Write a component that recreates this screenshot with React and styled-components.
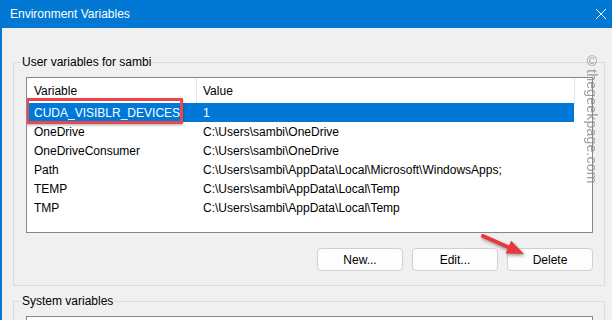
import React from "react";
import styled, { createGlobalStyle } from "styled-components";

const GlobalStyle = createGlobalStyle`
  html, body { margin: 0; padding: 0; background: #f0f0f0; }
  #root { width: 612px; height: 320px; overflow: hidden; }
  * { box-sizing: border-box; }
`;

const Window = styled.div`
  position: relative;
  width: 612px;
  height: 320px;
  display: flex;
  flex-direction: column;
  background: #f0f0f0;
  font-family: "Liberation Sans", Arial, sans-serif;
  font-size: 12px;
  color: #000;
  overflow: hidden;
`;

const TitleBar = styled.div`
  height: 28px;
  flex: 0 0 28px;
  background: #0078d4;
  color: #fff;
  display: flex;
  align-items: center;
  justify-content: space-between;
  padding: 0 5px 0 10px;
  font-size: 12px;
`;

const Body = styled.div`
  flex: 1;
  border-left: 2px solid #0078d4;
  padding: 34px 7px 0 11px;
  display: flex;
  flex-direction: column;
  gap: 15px;
  overflow: hidden;
`;

const Group = styled.div`
  border: 1px solid #dcdcdc;
  padding: 0 11px ${(p) => p.$pb}px 12px;
  display: flex;
  flex-direction: column;
  flex-shrink: 0;
`;

const GroupLabel = styled.div`
  align-self: flex-start;
  margin: -9px 0 0 -5px;
  padding: 0 1px;
  line-height: 16px;
  background: #f0f0f0;
`;

const List = styled.div`
  position: relative;
  margin-top: 7px;
  height: 156px;
  border: 1px solid #828790;
  background: #fff;
  overflow: hidden;
`;

const HeaderRow = styled.div`
  display: grid;
  grid-template-columns: 170px 378px 1fr;
  height: 25px;
`;

const HeaderCell = styled.div`
  display: flex;
  align-items: center;
  padding-left: ${(p) => p.$pl}px;
  border-right: ${(p) => (p.$last ? "none" : "1px solid #e5e5e5")};
`;

const Row = styled.div`
  display: grid;
  grid-template-columns: 170px 377px;
  width: 547px;
  height: 19px;
  background: ${(p) => (p.$selected ? "#0078d7" : "transparent")};
  color: ${(p) => (p.$selected ? "#fff" : "#000")};
`;

const Cell = styled.div`
  display: flex;
  align-items: center;
  padding-left: ${(p) => p.$pl}px;
  white-space: nowrap;
  overflow: hidden;
`;

const Highlight = styled.div`
  position: absolute;
  left: -1px;
  top: 20px;
  width: 157px;
  height: 26px;
  border: 3px solid #e8474b;
  border-radius: 1px;
  box-shadow: 0 1px 3px rgba(0, 0, 0, 0.35);
  pointer-events: none;
`;

const ButtonRow = styled.div`
  display: flex;
  justify-content: flex-end;
  gap: 9px;
  margin-top: 15px;
`;

const Button = styled.button`
  width: 86px;
  height: 23px;
  border: 1px solid #d0d0d0;
  border-radius: 4px;
  background: #fdfdfd;
  font-family: inherit;
  font-size: 12px;
  color: #000;
  padding: 0;
`;

const Watermark = styled.div`
  position: absolute;
  left: 584px;
  top: 53px;
  writing-mode: vertical-rl;
  font-family: "Liberation Sans", Arial, sans-serif;
  font-size: 14px;
  color: #8c8c8c;
  opacity: 0.85;
  letter-spacing: 0.2px;
`;

const ArrowSvg = styled.svg`
  position: absolute;
  left: 476px;
  top: 228px;
  filter: drop-shadow(1px 2px 1.5px rgba(0, 0, 0, 0.35));
`;

const userVars = [
  ["CUDA_VISIBLR_DEVICES", "1"],
  ["OneDrive", "C:\\Users\\sambi\\OneDrive"],
  ["OneDriveConsumer", "C:\\Users\\sambi\\OneDrive"],
  ["Path", "C:\\Users\\sambi\\AppData\\Local\\Microsoft\\WindowsApps;"],
  ["TEMP", "C:\\Users\\sambi\\AppData\\Local\\Temp"],
  ["TMP", "C:\\Users\\sambi\\AppData\\Local\\Temp"],
];

export default function App() {
  return (
    <>
      <GlobalStyle />
      <Window>
        <TitleBar>
          <span>Environment Variables</span>
          <svg width="12" height="12" viewBox="0 0 12 12">
            <path d="M1 1L11 11M11 1L1 11" stroke="#fff" strokeWidth="1" />
          </svg>
        </TitleBar>
        <Body>
          <Group $pb={14}>
            <GroupLabel>User variables for sambi</GroupLabel>
            <List>
              <HeaderRow>
                <HeaderCell $pl={7}>Variable</HeaderCell>
                <HeaderCell $pl={6}>Value</HeaderCell>
                <HeaderCell $last />
              </HeaderRow>
              {userVars.map(([k, v], i) => (
                <Row key={k} $selected={i === 0}>
                  <Cell $pl={7}>{k}</Cell>
                  <Cell $pl={6}>{v}</Cell>
                </Row>
              ))}
              <Highlight />
            </List>
            <ButtonRow>
              <Button>New...</Button>
              <Button>Edit...</Button>
              <Button>Delete</Button>
            </ButtonRow>
          </Group>
          <Group $pb={14}>
            <GroupLabel>System variables</GroupLabel>
            <List />
          </Group>
        </Body>
        <Watermark>©thegeekpage.com</Watermark>
        <ArrowSvg width="56" height="34" viewBox="0 0 56 34">
          <line x1="7" y1="8" x2="33" y2="19.5" stroke="#e8383d" strokeWidth="4" strokeLinecap="round" />
          <polygon points="48,26 29.6,25.6 35.2,12.8" fill="#e8383d" />
        </ArrowSvg>
      </Window>
    </>
  );
}
